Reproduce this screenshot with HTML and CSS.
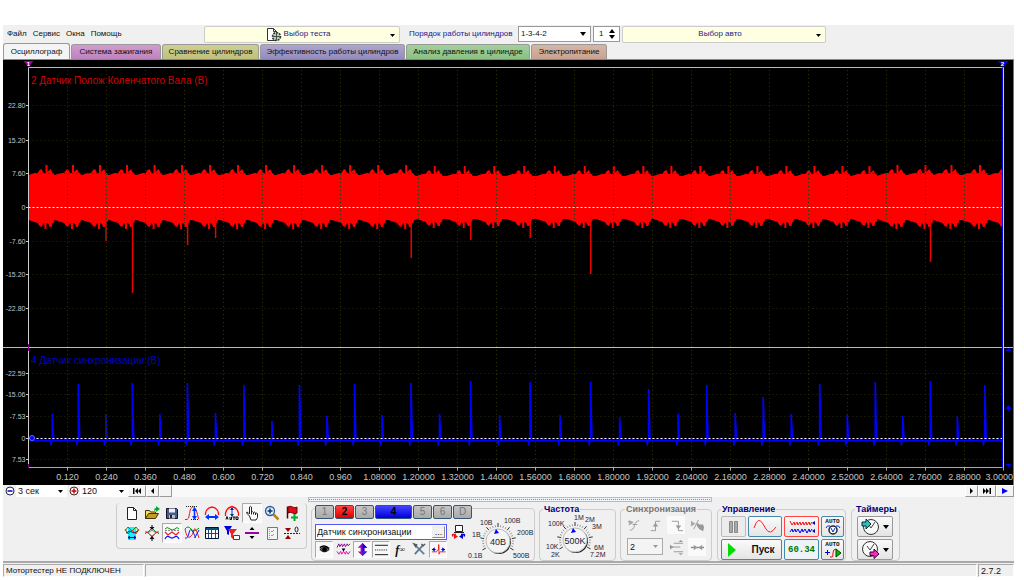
FILE: index.html
```html
<!DOCTYPE html>
<html lang="ru">
<head>
<meta charset="utf-8">
<title>Мотортестер</title>
<link rel="stylesheet" href="styles.css">
</head>
<body>
<div class="app">
  <header class="topbar">
    <nav class="menu">
      <button>Файл</button><button>Сервис</button><button>Окна</button><button>Помощь</button>
    </nav>
    <button class="picker picker-test">
      <svg width="16" height="15" viewBox="0 0 16 15"><path d="M1.500 1.500h6l3 3v9h-9z" fill="#fff" stroke="#333"/><path d="M7.500 1.500v3h3" fill="none" stroke="#333"/><circle cx="10.500" cy="9.500" r="4" fill="#bcb" stroke="#333" stroke-width="1.500" stroke-dasharray="2 1"/><path d="M7 9.500h7M10.500 6v7" stroke="#454"/></svg>
      <span>Выбор теста</span>
      <svg class="caret" width="5" height="3"><path d="M0 0h5l-2.500 3z"/></svg>
    </button>
    <label class="order-label" for="order">Порядок работы цилиндров</label>
    <span class="combo combo-order"><select id="order"><option>1-3-4-2</option></select><svg class="caret" width="6" height="4"><path d="M0 0h6l-3 4z"/></svg></span>
    <span class="combo combo-num"><input type="text" value="1" aria-label="Цилиндр"><svg width="6" height="10"><path d="M0 4h6l-3-4zM0 6h6l-3 4z"/></svg></span>
    <button class="picker picker-car"><span>Выбор авто</span><svg class="caret" width="5" height="3"><path d="M0 0h5l-2.500 3z"/></svg></button>
  </header>
  <div class="tabs" role="tablist">
    <button class="tab tab-active" role="tab" aria-selected="true">Осциллограф</button>
    <button class="tab tab-ignition" role="tab">Система зажигания</button>
    <button class="tab tab-compare" role="tab">Сравнение цилиндров</button>
    <button class="tab tab-efficiency" role="tab">Эффективность работы цилиндров</button>
    <button class="tab tab-pressure" role="tab">Анализ давления в цилиндре</button>
    <button class="tab tab-power" role="tab">Электропитание</button>
  </div>
  <main class="scope"><svg id="scope" class="scope-svg" role="img" aria-label="Осциллограмма"></svg></main>
  <div class="scroller">
    <button class="flat" aria-label="Уменьшить"><svg width="10" height="10"><circle cx="5" cy="5" r="4" fill="#fff" stroke="#224"/><path d="M2.500 5h5" stroke="#00c" stroke-width="1.500"/></svg></button>
    <span class="zoom zoom-time"><select aria-label="Развёртка"><option>3 сек</option></select><svg class="caret" width="5" height="3"><path d="M0 0h5l-2.500 3z"/></svg></span>
    <button class="flat" aria-label="Увеличить"><svg width="10" height="10"><circle cx="5" cy="5" r="4" fill="#fff" stroke="#422"/><path d="M2.500 5h5M5 2.500v5" stroke="#c00" stroke-width="1.500"/></svg></button>
    <span class="zoom zoom-div"><select aria-label="Шаг"><option>120</option></select><svg class="caret" width="5" height="3"><path d="M0 0h5l-2.500 3z"/></svg></span>
    <button class="step step-wide" aria-label="В начало"><svg width="8" height="6"><path d="M0 0h1.500v6h-1.500zM8 0v6l-3-3zM5 0v6l-3-3z"/></svg></button>
    <button class="step" aria-label="Назад"><svg width="3" height="6"><path d="M3 0v6l-3-3z"/></svg></button>
    <button class="step" aria-label="Ползунок"></button>
    <span class="track"></span>
    <button class="step" aria-label="Вперёд"><svg width="3" height="6"><path d="M0 0v6l3-3z"/></svg></button>
    <button class="step step-wide" aria-label="В конец"><svg width="8" height="6"><path d="M6.500 0h1.500v6h-1.500zM0 0v6l3-3zM3 0v6l3-3z"/></svg></button>
    <button class="step step-wide" aria-label="Воспроизвести"><svg width="6" height="6"><path d="M0 0v6l6-3z" fill="#00f"/></svg></button>
  </div>
  <section class="tools">
    <div class="toolbox">
      <button aria-label="Новый"><svg viewBox="0 0 16 16"><path d="M3.500 2.500h6l3 3v9h-9z" fill="#fff" stroke="#222"/><path d="M9.500 2.500v3h3" fill="none" stroke="#222"/></svg></button>
      <button aria-label="Открыть"><svg viewBox="0 0 16 16"><path d="M1.500 13.500v-8h4l1 1.500h5v2" fill="#ffe34a" stroke="#430"/><path d="M1.500 13.500l3-5h10l-3 5z" fill="#c99a26" stroke="#430"/><path d="M10 6q0-3 2-3v-2l4 3-4 3v-2z" fill="#0a3"/></svg></button>
      <button aria-label="Сохранить"><svg viewBox="0 0 16 16"><path d="M2.500 3.500h10l1 1v9h-11z" fill="#445e86" stroke="#112"/><path d="M5 3.500h6v4h-6z" fill="#eef"/><path d="M5 10h6v3.500h-6z" fill="#bbc"/><path d="M6 10h2v3h-2z" fill="#223"/></svg></button>
      <button aria-label="Размах"><svg viewBox="0 0 16 16"><path d="M1 14.500h2q2 0 2.500-6t3-6.500h1q3 1 5 12" fill="none" stroke="#f11"/><path d="M2 1.500h12M7 14.500h8" stroke="#222" stroke-dasharray="1 1"/><path d="M10.500 4v9" stroke="#03f" stroke-width="1.500"/><path d="M8 6l2.500-4 2.500 4zM8 11l2.500 4 2.500-4z" fill="#03f"/></svg></button>
      <button aria-label="Период"><svg viewBox="0 0 16 16"><path d="M1.500 10v-2q1-5 6.500-6 5.500 1 6.500 6v2" fill="none" stroke="#f11" stroke-width="1.300"/><path d="M3 12h10" stroke="#03f" stroke-width="2"/><path d="M5 9v6l-4-3zM11 9v6l4-3z" fill="#03f"/></svg></button>
      <button aria-label="Авто"><svg viewBox="0 0 16 16"><path d="M1.500 11v-3q1-5 6.500-6.500 5.500 1.500 6.500 6.500v3" fill="none" stroke="#f11" stroke-width="1.300"/><path d="M8 4v6" stroke="#03f"/><path d="M6 5l2-3 2 3zM6 9l2 3 2-3z" fill="#038"/><path d="M2 14.500l1-3 1 3M6 12v2.500h1.500v-2.500M8.500 12h3M10 12v3M12 12v2.500h2v-2.500z" fill="none" stroke="#000"/></svg></button>
      <button class="pressed" aria-label="Рука"><svg viewBox="0 0 16 16"><path d="M5.500 11l-3-3q0-1.500 1.500-.5l1.500 1.500v-7q1-1.500 2 0v5q1-1 2 .5 1-1 2 .5 1.500-.5 2 1v3.500l-1.500 2.500h-5z" fill="#fff" stroke="#222"/><path d="M7.500 7v2.500M9.500 7.500v2M11.500 8v2" stroke="#222"/></svg></button>
      <button aria-label="Лупа"><svg viewBox="0 0 16 16"><path d="M9.500 9.500l5 5" stroke="#b98418" stroke-width="2.500"/><circle cx="6" cy="6" r="4.500" fill="#d9efff" stroke="#359" stroke-width="1.300"/><path d="M3.500 6h5M6 3.500v5" stroke="#136" stroke-width="1.500"/></svg></button>
      <button aria-label="Метка"><svg viewBox="0 0 16 16"><path d="M3.500 1.500v12" stroke="#500" stroke-width="1.500"/><path d="M4 2q2-1.500 4.500 0t4.500 0v6q-2 1.500-4.500 0t-4.500 0z" fill="#e00b1c" stroke="#700"/><path d="M7 12.500h7M10.500 9v7" stroke="#0a2" stroke-width="2"/></svg></button>
      <button aria-label="Окно сигналов"><svg viewBox="0 0 16 16"><path d="M4 2h8v13h-8z" fill="#19efff"/><path d="M1 6l3-4 4 4 4-4 3 4" fill="none" stroke="#090"/><path d="M1 4l3 5 4-4 4 4 3-5" fill="none" stroke="#d32"/><path d="M2 8l4-2 4 2 4-2" fill="none" stroke="#222"/><path d="M4 12.500h8M6 11l-2 1.500 2 1.500M10 11l2 1.500-2 1.500" stroke="#00a" fill="none"/></svg></button>
      <button aria-label="Совместить"><svg viewBox="0 0 16 16"><path d="M1 7h3l4-4 4 4h3" fill="none" stroke="#090"/><path d="M1 9l2-2 5 5 5-5 2 2" fill="none" stroke="#e22"/><path d="M4 8l4-3 4 3-4 3z" fill="none" stroke="#777"/><path d="M8 0v3M8 13v3" stroke="#000"/><path d="M5.500 2h5l-2.500 3zM5.500 14h5l-2.500-3z" fill="#111"/></svg></button>
      <button class="pressed" aria-label="Разнести"><svg viewBox="0 0 16 16"><path d="M1 4q2-3 5 0 2 2 5 0 2-3 4 0" fill="none" stroke="#090"/><path d="M1 5.500h14" stroke="#888" stroke-dasharray="2 1"/><path d="M1 7l3 3 4-3 4 3 3-3" fill="none" stroke="#e22" stroke-width="1.300"/><path d="M1 14q2-4 4.500-2t5 0 4.500 2" fill="none" stroke="#11f" stroke-width="1.300"/></svg></button>
      <button aria-label="Наложить"><svg viewBox="0 0 16 16"><path d="M1 4q3-4 6 0t8-1" fill="none" stroke="#090"/><path d="M1 4q2 10 5 8t4-7 5 8" fill="none" stroke="#e22"/><path d="M1 13q3 1 4-5t4-1 2 6 4-8" fill="none" stroke="#11f"/></svg></button>
      <button aria-label="Таблица"><svg viewBox="0 0 16 16"><path d="M1.500 2.500h13v11h-13z" fill="#fff" stroke="#013"/><path d="M1.500 3h13v2h-13z" fill="#057"/><path d="M4.500 3v10M7.500 3v10M11.500 3v10M1.500 8.500h13" stroke="#247"/></svg></button>
      <button aria-label="Фильтр"><svg viewBox="0 0 16 16"><path d="M0 1h8l-3 5v4l-2-1v-3z" fill="#00d"/><path d="M4 4h9l-4 5v5l-2-2v-3z" fill="#e22"/><path d="M9.500 10.500h6v4h-6z" fill="#fff" stroke="#33a"/></svg></button>
      <button aria-label="Разделить"><svg viewBox="0 0 16 16"><path d="M1 8h14" stroke="#90a" stroke-width="2"/><path d="M5.500 5l2.500-3 2.500 3zM5.500 11l2.500 3 2.500-3z"/></svg></button>
      <button aria-label="Отчёт"><svg viewBox="0 0 16 16"><path d="M3.500 2.500h10v12h-10z" fill="#f4f4f4" stroke="#777"/><path d="M5.500 4v9" stroke="#999" stroke-dasharray="1 1"/><path d="M7 6l1 1 2-2M7 10l1 1 2-2" fill="none" stroke="#999"/></svg></button>
      <button aria-label="Ноль"><svg viewBox="0 0 16 16"><path d="M0 8.500h16" stroke="#222" stroke-dasharray="2 1"/><path d="M1 3h6l-3 4zM1 14h6l-3-4z" fill="#900"/><ellipse cx="12.500" cy="4.500" rx="1.500" ry="2.500" fill="none" stroke="#222"/></svg></button>
    </div>
    <div class="center">
      <div class="splitter"></div>
      <div class="groups">
        <div class="channel">
          <div class="chan-row">
            <button>1</button><button class="chan-red">2</button><button>3</button><button class="chan-blue">4</button><button>5</button><button>6</button><button>D</button>
          </div>
          <div class="chan-main">
            <div class="chan-left">
              <div class="name-row">
                <span class="name-box"><input type="text" value="Датчик синхронизации" aria-label="Имя канала"><button aria-label="Выбрать датчик">...</button></span>
                <svg width="15" height="15" viewBox="0 0 15 15"><path d="M4.500 1.500h7v6h-7z" fill="#fff" stroke="#222"/><path d="M3 8.500h10" stroke="#222"/><path d="M5 10.500h-3q-1 0 0 2" fill="none" stroke="#e11" stroke-width="1.500"/><path d="M3 10v5l4-2.500z" fill="#e11"/><path d="M10 10.500h3q1 0 0 2" fill="none" stroke="#00d" stroke-width="1.500"/><path d="M12 10v5l-4-2.500z" fill="#00d"/></svg>
              </div>
              <div class="icon-row">
                <button class="pressed" aria-label="Видимость"><svg viewBox="0 0 16 16"><path d="M3 8q5-5 10 0-5 5-10 0z" fill="#666" stroke="#111"/><circle cx="8" cy="8" r="2.500"/><path d="M3 6q5-4 10 1" fill="none" stroke="#000" stroke-width="1.500"/></svg></button>
                <button aria-label="Инверсия"><svg viewBox="0 0 16 16"><path d="M1 6l2-4 1 3 2-3 1 3 2-3 1 3 2-3 1 2 2-2" fill="none" stroke="#808"/><path d="M1 10l2 3 2-3 1 3 2-3 2 3 1-3 2 3 2-3" fill="none" stroke="#d0a"/><path d="M6 7h4l-2 3z"/></svg></button>
                <button class="pressed" aria-label="Сдвиг"><svg viewBox="0 0 16 16"><path d="M8 1l5 5h-3v4h3l-5 5-5-5h3v-4h-3z" fill="#a0b"/><path d="M8 1l5 5h-3v4h-2z" fill="#00d"/><path d="M8 10h5l-5 5z" fill="#22e"/></svg></button>
                <button class="pressed" aria-label="Уровни"><svg viewBox="0 0 16 16"><path d="M1 3.500h14M1 13.500h14" stroke="#111"/><path d="M1 8.500h14" stroke="#111" stroke-dasharray="1 1"/></svg></button>
                <button class="fx" aria-label="Функция"><i>f</i><sub>∞</sub></button>
                <button aria-label="Настройка"><svg viewBox="0 0 16 16"><path d="M3 3l10 10" stroke="#58a" stroke-width="2"/><path d="M12 3l-9 10" stroke="#678" stroke-width="2"/><path d="M10 2l2 2 2-2M2 2l3 1-1 2z" fill="none" stroke="#555" stroke-width="1.500"/></svg></button>
                <button class="pressed" aria-label="Синхронизация по каналу"><svg viewBox="0 0 16 16"><path d="M1 10.500h5l1-2h1v-6M8.500 3v10l1-2.500h6" fill="none" stroke="#e22"/><path d="M1 8h4M11 8h4" stroke="#00c"/><path d="M4 5.500v5l-3-2.500zM12 5.500v5l3-2.500z" fill="#00c"/></svg></button>
              </div>
            </div>
            <svg class="dial" data-dial="volt" width="70" height="46" viewBox="466 515 70 46"></svg>
          </div>
        </div>
        <fieldset class="group freq"><legend>Частота</legend><svg class="dial" data-dial="freq" width="74" height="46" viewBox="540 515 74 46"></svg></fieldset>
        <fieldset class="group sync" disabled><legend>Синхронизация</legend>
          <button aria-label="Ручная"><svg viewBox="0 0 16 16"><path d="M3 13q4 0 5-5t5-5" fill="none" stroke="#999"/><path d="M1 4h5M6 7h5" stroke="#999"/><path d="M2 2v6l5-3z" fill="#aaa"/></svg></button>
          <button aria-label="Фронт"><svg viewBox="0 0 16 16"><path d="M3 13.500h5v-10h5" fill="none" stroke="#999"/><path d="M5 9h6l-3-4z" fill="#999"/></svg></button>
          <button class="lit" aria-label="Спад"><svg viewBox="0 0 16 16"><path d="M3 3.500h7v10h5" fill="none" stroke="#999"/><path d="M7 8h6l-3 4z" fill="#999"/></svg></button>
          <button aria-label="Захват"><svg viewBox="0 0 16 16"><path d="M1 3v6l5-3z" fill="#aaa"/><path d="M4 12l5-10" stroke="#999"/><path d="M8 5l2 2 4 0 1 3-1 4-4-2-3-4z" fill="#999"/></svg></button>
          <span class="combo combo-sync"><select aria-label="Канал синхронизации"><option>2</option></select><svg class="caret" width="5" height="3"><path d="M0 0h5l-2.500 3z" fill="#999"/></svg></span>
          <button aria-label="Уровень"><svg viewBox="0 0 16 16"><path d="M1 7.500h11M5 3.500h10M5 12.500h10" stroke="#999"/><path d="M1 5v5l4-2.500zM10 2h5l-2.500-2zM10 14h5l-2.500 2z" fill="#999"/></svg></button>
          <button class="lit" aria-label="Центр"><svg viewBox="0 0 16 16"><path d="M1 8h14" stroke="#888" stroke-width="1.500"/><path d="M4 5v6l4-3zM13 5v6l-4-3z" fill="#999"/></svg></button>
        </fieldset>
      </div>
    </div>
    <fieldset class="group control"><legend>Управление</legend>
      <button class="btn off" aria-label="Пауза"><svg width="9" height="12"><path d="M.5 .5h3v11h-3zM5.500 .5h3v11h-3z" fill="#aaa" stroke="#888"/></svg></button>
      <button class="btn" aria-label="Синус"><svg width="24" height="14"><path d="M1 8Q5-5 10 4l3 5q4 7 10-2" fill="none" stroke="#f22"/></svg></button>
      <button class="btn red" aria-label="Сигналы"><svg width="26" height="14"><path d="M1 1l2 4 2-3 1 3 2-3 1 3 2-3 1 3 2-3 1 3 2-3 1 3 2-3 1 3 2-3" fill="none" stroke="#e11"/><path d="M1 12l2-3 1 3 2-3 1 3 2-3 2 4 2-4 1 3 2-3 2 4 2-4 1 3 2-3" fill="none" stroke="#00e"/><path d="M26 1v4l-3-2zM26 9v4l-3-2z" fill="#00a"/></svg></button>
      <button class="btn auto" aria-label="Авто ручка"><span>AUTO</span><svg width="16" height="10"><circle cx="8" cy="5" r="4" fill="#fff" stroke="#223" stroke-width="1.500"/><path d="M6 3l2 4 2-4M1 3q1-3 4-2M15 3q-1-3-4-2" fill="none" stroke="#03d"/></svg></button>
      <button class="btn start"><svg width="8" height="14"><path d="M0 0v14l8-7z" fill="#0d0"/></svg>Пуск</button>
      <button class="btn value">60.34</button>
      <button class="btn auto" aria-label="Авто пуск"><span>AUTO</span><svg width="16" height="10"><path d="M5 9h2q1 0 1-4t3-4" fill="none" stroke="#e11"/><path d="M0 4.500h5M2.500 2v5" stroke="#00d"/><path d="M11 1v8l5-4z" fill="#0b0" stroke="#040"/></svg></button>
    </fieldset>
    <fieldset class="group timers"><legend>Таймеры</legend>
      <button class="btn" aria-label="Таймер старта"><svg width="19" height="18"><circle cx="10" cy="9" r="7.500" fill="#f8f8f8" stroke="#333"/><path d="M10 10l4-6M7 6l3 4" stroke="#444" fill="none"/><path d="M1 4h4v-3l5 5-5 5v-3h-4z" fill="#3bb" stroke="#033"/></svg><svg width="6" height="4"><path d="M0 0h6l-3 4z"/></svg></button>
      <button class="btn" aria-label="Таймер остановки"><svg width="19" height="18"><circle cx="9" cy="8" r="7.500" fill="#f8f8f8" stroke="#333"/><path d="M9 9l4-6M6 5l3 4" stroke="#444" fill="none"/><path d="M9 11h4v-3l5 5-5 4.500v-3h-4z" fill="#e3b" stroke="#303"/></svg><svg width="6" height="4"><path d="M0 0h6l-3 4z"/></svg></button>
    </fieldset>
  </section>
  <footer class="status"><span class="status-main">Мотортестер НЕ ПОДКЛЮЧЕН</span><span class="status-mid"></span><span class="status-ver">2.7.2</span></footer>
</div>
<script src="scope.js"></script>
</body>
</html>
```
FILE: styles.css
```css
* { box-sizing: border-box; }
body { margin: 0; padding: 25px 10px 3px 3px; background: #fff; font: 9px/12px "Liberation Sans", Arial, sans-serif; color: #111; }
button, input, select { font: inherit; color: inherit; margin: 0; padding: 0; border: 0; background: none; border-radius: 0; }
button { display: flex; align-items: center; justify-content: center; white-space: nowrap; }
select { appearance: none; opacity: 1; width: 100%; }
svg { flex: none; display: block; }
.app { background: #f0f0f0; }

.topbar { display: flex; height: 18px; align-items: center; font-size: 8px; }
.menu { display: flex; gap: 6px; width: 201px; padding-left: 4px; }
.picker { height: 17px; background: #ffffe1; border: 1px solid #ccc; border-radius: 2px; color: #1a1a8c; gap: 2px; position: relative; }
.picker .caret { position: absolute; right: 4px; top: 7px; fill: #000; }
.picker-test { width: 196px; padding-right: 8px; }
.picker-car { width: 204px; margin-left: 2px; padding-right: 8px; }
.order-label { width: 118px; padding-left: 9px; color: #1a1a8c; white-space: nowrap; }
.combo { display: flex; align-items: center; justify-content: space-between; height: 16px; background: #fff; border: 1px solid #999; padding: 0 4px 0 2px; }
.combo-order { width: 73px; }
.combo-num { width: 27px; margin-left: 2px; padding-left: 5px; }
.combo-num input { width: 8px; }

.tabs { display: flex; height: 17px; gap: 1px; align-items: flex-end; border-bottom: 1px solid #888; font-size: 8px; }
.tab { height: 15px; border: 1px solid #999; border-bottom: 0; border-radius: 3px 3px 0 0; }
.tab-active { width: 67px; height: 16px; background: #f4f4f4; }
.tab-ignition { width: 90px; background: linear-gradient(#d29cd0, #bd83bd); }
.tab-compare { width: 97px; background: linear-gradient(#cfcf94, #c0c07c); }
.tab-efficiency { width: 145px; background: linear-gradient(#aea6d0, #938bbc); }
.tab-pressure { width: 124px; background: linear-gradient(#a3d09c, #8bc083); }
.tab-power { width: 76px; background: linear-gradient(#d6b6a6, #c8a291); }

.scope { height: 425px; background: #000; border-right: 1px solid #777; overflow: hidden; }
.scope-svg { width: 100%; height: 100%; }
.scope-svg .axis { font-size: 9px; fill: #c4c4c4; text-anchor: middle; }
.scope-svg .axis-last { text-anchor: end; }
.scope-svg .scale { font-size: 7px; fill: #c4c4c4; text-anchor: end; }
.scope-svg .title { font-size: 10px; }
.scope-svg .mark { font-size: 6px; fill: #fff; text-anchor: middle; font-weight: bold; }

.scroller { display: flex; height: 12px; background: #f9f9f9; }
.flat { width: 13px; background: #f0f0f0; }
.zoom { display: flex; align-items: center; background: #fff; padding: 0 4px 0 2px; }
.zoom-time { width: 51px; }
.zoom-div { width: 48px; }
.step { width: 13px; background: #f4f4f4; border: 1px solid; border-color: #fff #999 #999 #fff; }
.step-wide { width: 18px; }
.track { flex: 1; }

.tools { display: flex; height: 66px; border-bottom: 2px solid #aaa; gap: 5px; }
.toolbox { display: grid; grid-template-columns: repeat(9, 20px); grid-auto-rows: 20px; width: 191px; height: 46px; margin: 6px -4px 0 113px; padding-left: 5px; border: 1px solid #ccc; border-top: 0; border-radius: 4px; }
.toolbox svg { width: 16px; height: 16px; }
.icon-row svg { width: 15px; height: 15px; }
.pressed { background: #f8f8f8; border: 1px solid; border-color: #aaa #fff #fff #aaa; }
.center { width: 404px; }
.splitter { height: 5px; border: 1px solid #bbb; background: linear-gradient(90deg, #69c 50%, transparent 50%) 0 1px / 2px 1px repeat-x #eef4fa; }
.groups { display: flex; gap: 4px; padding-left: 3px; }
.channel { width: 224px; height: 53px; margin-top: 6px; border: 1px solid #ccc; border-radius: 4px; padding-left: 3px; }
.chan-row { display: flex; gap: 1px; margin-top: -4px; position: relative; }
.chan-row button { width: 19px; height: 14px; background: linear-gradient(#c4c4c4, #aaa); border: 1px solid #357; border-radius: 2px; color: #777; font-size: 10px; }
.chan-row .chan-red { background: linear-gradient(#f44, #d00); color: #000; font-weight: bold; }
.chan-row .chan-blue { width: 37px; background: linear-gradient(#44f, #00d); color: #000; font-weight: bold; }
.chan-main { display: flex; }
.chan-left { width: 152px; padding-top: 5px; }
.name-row { display: flex; gap: 4px; }
.name-box { display: flex; width: 132px; height: 16px; background: #fff; border: 1px solid #55f; padding: 1px; }
.name-box input { flex: 1; min-width: 0; }
.name-box button { width: 13px; border: 1px solid; border-color: #eee #888 #888 #eee; background: #f0f0f0; line-height: 6px; }
.icon-row { display: flex; gap: 1px; padding-top: 1px; }
.icon-row button { width: 18px; height: 17px; }
.fx { font-family: "Liberation Serif", serif; font-weight: bold; font-size: 12px; }
.fx sub { font-size: 8px; }
.dial { font-size: 7px; fill: #223; }
.channel .dial { margin: -4px -2px 0 -1px; }
.dial .big { font-size: 9px; text-anchor: middle; }

.group { min-width: 0; margin: 3px 0 0; padding: 0; height: 56px; border: 1px solid #ccc; border-radius: 4px; }
.group legend { margin-left: 3px; padding: 0 1px; font-weight: bold; line-height: 9px; color: #00007c; }
.freq { width: 77px; }
.sync { width: 92px; display: grid; grid-template-columns: repeat(4, 21px); align-content: start; padding: 2px 0 0 4px; row-gap: 4px; }
.control legend, .timers legend, .sync legend { margin-left: 0; }
.sync legend { color: #777; }
.sync button { height: 18px; width: 18px; }
.sync button svg { width: 15px; height: 15px; }
.sync .lit { background: #fafafa; }
.combo-sync { grid-column: span 2; width: 36px; height: 17px; background: #f4f4f4; border-color: #aaa; margin-left: 2px; }
.control { width: 129px; margin-top: 8px; display: grid; grid-template-columns: 25px 34px 35px 23px; gap: 2px; padding: 2px 1px 0 3px; align-content: start; }
.timers { width: 49px; margin-top: 8px; display: grid; gap: 2px; padding: 2px 0 0 5px; align-content: start; }
.timers legend { margin-left: -2px; }
.timers .btn { width: 36px; gap: 3px; border-color: #999; }
.btn { height: 21px; background: linear-gradient(#fafafa, #e4e4e4); border: 1px solid #48a; border-radius: 2px; }
.btn.off { border-color: #bbb; background: #ececec; }
.btn.red { border-color: #f44; }
.btn.start { grid-column: span 2; gap: 15px; font-weight: bold; font-size: 10px; }
.btn.value { color: #070; font: bold 9px "Liberation Mono", monospace; background: #eef3f8; }
.btn.auto { flex-direction: column; }
.auto span { font: bold 6px/7px "Liberation Mono", monospace; }

.status { display: flex; height: 14px; padding-top: 1px; gap: 1px; font-size: 8px; }
.status span { border: 1px solid; border-color: #aaa #fff #fff #aaa; padding-left: 2px; line-height: 12px; white-space: nowrap; }
.status-main { width: 141px; }
.status-mid { flex: 1; }
.status .status-ver { width: 36px; font-size: 9px; }
```
FILE: scope.js
```js
const svg = document.getElementById('scope');
const LEFT = 25.5, TOP = 7.5, BOTTOM = 407.5, SPLIT = 287.5, BASE = 976;

function line(x1, y1, x2, y2, color, extra = '') {
  return `<line x1="${x1}" y1="${y1}" x2="${x2}" y2="${y2}" stroke="${color}" ${extra}/>`;
}

function draw() {
  const w = svg.clientWidth, right = w - 9.5, k = (right - LEFT) / (BASE - 1.5);
  const px = x => LEFT + (x - 28.5) * k;
  let out = '';

  const peaks = [46.5, 73, 100, 127, 154.5, 182, 210, 238, 266, 294, 322, 350, 378, 406, 434.5, 464.5, 494, 524, 554.5, 584.5, 613.5, 643, 671, 700, 728, 757, 786, 814, 842, 869, 897, 925, 951, 979.5, 1007];
  const top = [[-18, 115], [-12, 113], [-9, 113], [-7, 110], [-5, 109], [-3, 113], [-1, 113], [-1, 105], [1, 105], [1, 112], [4, 109], [6, 113], [7, 113], [8, 115]];
  const low = [[-18, 160], [-9, 163], [-7, 166], [-5, 167], [-3, 163], [-2, 165], [-2, 169], [0, 169], [0, 163], [2, 164], [3, 167], [5, 167], [6, 163], [7, 163], [8, 160], [9, 160]];
  const clip = x => Math.min(right, Math.max(LEFT, px(x)));
  const up = [`${LEFT},115`], down = [`${LEFT},160`];
  peaks.forEach((p, i) => {
    const soft = i > 13 && i < 30 ? 1 : 0;
    top.forEach(([dx, y]) => up.push(`${clip(p + dx)},${y + soft}`));
    low.forEach(([dx, y]) => down.push(`${clip(p + dx)},${y - soft}`));
  });
  out += `<polygon points="${up.concat(down.reverse()).join(' ')}" fill="#f00"/>`;
  [[106, 181], [132.5, 233], [187.5, 185], [215.5, 178], [411, 198], [470.5, 180], [530, 178], [590.5, 214], [930, 202]]
    .forEach(([x, y]) => { out += line(px(x), 155, px(x), y, '#e00', 'stroke-width="1.500"'); });

  const blue = [[52.5, 354], [78.5, 324], [106, 354], [132.5, 323], [160, 354], [187.5, 323], [215.5, 353], [244, 325], [272, 361], [299.5, 325], [327, 356], [354.5, 324], [382, 355], [411, 323], [439.5, 354], [470.5, 321], [499.5, 355], [530, 322], [560, 355], [590.5, 322], [619.5, 357], [648.5, 329], [678, 354], [706.5, 325], [735, 353], [763, 337], [791, 354], [819.5, 324], [847, 355], [875, 322], [902.5, 356], [930, 321], [957, 356], [984.5, 325]];
  blue.forEach(([x, y]) => {
    const a = px(x);
    out += `<path d="M${a - 1} ${y}H${a + 0.6}L${a + 2} 380H${a - 1}z" fill="#00f"/><path d="M${a - 3} 380h3l-1 6h-1z" fill="#00f"/><path d="M${a + 11} 380l2-3 2 3z" fill="#00f"/>`;
  });
  out += line(LEFT, 380.5, right, 380.5, '#00f', 'stroke-width="2"');

  const step = (right - LEFT) / 25;
  for (let i = 1; i <= 25; i++) {
    const x = LEFT + i * step;
    out += line(x, BOTTOM, x, BOTTOM + 3, '#aaa');
    if (i < 25) {
      const v = i * 0.12;
      out += line(x, 10, x, BOTTOM, '#30300c', 'stroke-dasharray="1 3"');
      out += `<text class="axis" x="${x}" y="420">${i < 9 ? v.toFixed(3) : v.toFixed(5)}</text>`;
    }
  }
  out += `<text class="axis axis-last" x="${w}" y="420">3.0000</text>`;
  [[45.5, '22.80'], [80.5, '15.20'], [113.5, '7.60'], [147.5, '0'], [181.5, '-7.60'], [214.5, '-15.20'], [248.5, '-22.80'],
   [313.5, '-22.59'], [334.5, '-15.06'], [356.5, '-7.53'], [378.5, '0'], [399.5, '7.53']].forEach(([y, t]) => {
    const zero = t === '0';
    out += line(LEFT, y, right, y, zero ? '#fff' : '#28280a', zero ? 'stroke-dasharray="2 2"' : 'stroke-dasharray="1 3"');
    out += line(23, y, LEFT, y, '#ccc');
    out += `<text class="scale" x="22.500" y="${y + 2}">${t}</text>`;
  });

  out += line(LEFT, TOP, right, TOP, '#bbb') + line(0, SPLIT, w, SPLIT, '#bbb') + line(LEFT, BOTTOM, right, BOTTOM, '#aaa');
  out += line(LEFT, TOP, LEFT, BOTTOM, '#ccc');
  out += line(LEFT, 284, LEFT, 291, '#808') + line(LEFT, 404, LEFT, 408, '#808');
  out += line(right - 1, TOP, right - 1, BOTTOM, '#00f') + line(right, TOP, right, BOTTOM, '#ccf');
  out += `<path d="M${LEFT - 5} 1h10l-5 6z" fill="#909"/><path d="M${right - 6} 1h11l-5 6z" fill="#00f"/>`;
  out += `<text class="mark" x="${LEFT}" y="6">1</text><text class="mark" x="${right - 1}" y="6">2</text>`;
  out += `<circle cx="29" cy="378" r="2.500" fill="#00f" stroke="#66f"/>`;
  const a = w - 4.5;
  out += `<path d="M${a - 3} 291h6l-3-3zM${a - 3} 348l3-3 3 3-3 3zM${a - 3} 404h6l-3 3z" fill="#00f"/>`;
  out += '<text class="title" x="28" y="24" fill="#d40000">2 Датчик Полож Коленчатого Вала (В)</text>';
  out += '<text class="title" x="28" y="304" fill="#0000c8">4 Датчик синхронизации (В)</text>';
  svg.innerHTML = out;
}

const dials = {
  volt: { cx: 498, cy: 541, big: '40B', labels: [[468, 558, '0.1B'], [472, 537, '1B'], [480, 525, '10B'], [504, 523, '100B'], [517, 535, '200B'], [513, 558, '500B']] },
  freq: { cx: 575, cy: 541, big: '500K', labels: [[551, 558, '2K'], [546, 550, '10K'], [548, 527, '100K'], [574, 521, '1M'], [585, 523, '2M'], [592, 530, '3M'], [594, 551, '6M'], [590, 558, '7.2M']] }
};

document.querySelectorAll('[data-dial]').forEach(el => {
  const { cx, cy, big, labels } = dials[el.dataset.dial];
  let out = '';
  for (let i = 0; i < 25; i++) {
    const t = (150 + i * 10) * Math.PI / 180, r = i % 4 ? 16 : 18;
    out += line(cx + 14 * Math.cos(t), cy + 14 * Math.sin(t), cx + r * Math.cos(t), cy + r * Math.sin(t), i % 4 ? '#999' : '#333');
  }
  out += `<circle cx="${cx + 1}" cy="${cy + 1}" r="12" fill="#222"/><circle cx="${cx}" cy="${cy}" r="12" fill="#f4f4f4" stroke="#bbb"/>`;
  out += `<path d="M${cx - 4} ${cy - 7}l2-5 3 4z" fill="#00f"/><text class="big" x="${cx}" y="${cy + 4}">${big}</text>`;
  labels.forEach(([x, y, t]) => { out += `<text x="${x}" y="${y}">${t}</text>`; });
  el.innerHTML = out;
});

draw();
window.addEventListener('resize', draw);
```
